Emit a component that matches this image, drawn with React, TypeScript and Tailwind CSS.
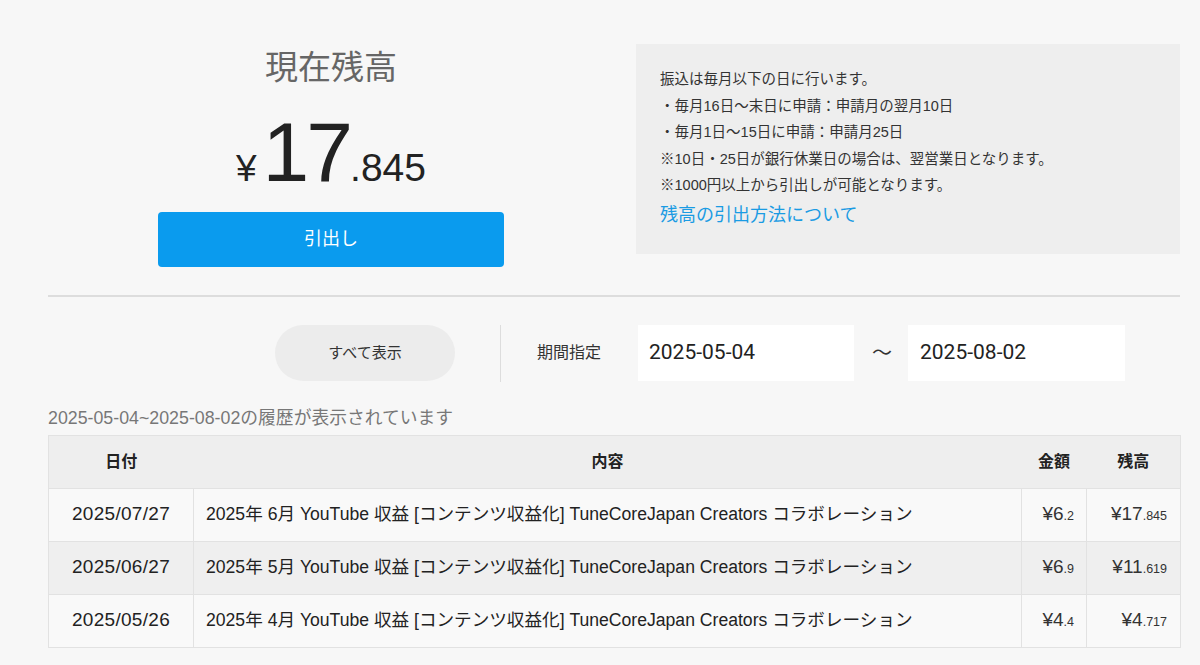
import React from 'react';

const font = { fontFamily: '"Liberation Sans", "Noto Sans CJK JP", sans-serif' };
const inputFont = { fontFamily: 'Roboto, "Liberation Sans", sans-serif' };

type Row = { date: string; month: string; amount: [string, string]; balance: [string, string] };

const rows: Row[] = [
  { date: '2025/07/27', month: '6月', amount: ['6', '2'], balance: ['17', '845'] },
  { date: '2025/06/27', month: '5月', amount: ['6', '9'], balance: ['11', '619'] },
  { date: '2025/05/26', month: '4月', amount: ['4', '4'], balance: ['4', '717'] },
];

const notes = [
  '振込は毎月以下の日に行います。',
  '・毎月16日〜末日に申請：申請月の翌月10日',
  '・毎月1日〜15日に申請：申請月25日',
  '※10日・25日が銀行休業日の場合は、翌営業日となります。',
  '※1000円以上から引出しが可能となります。',
];

const Yen: React.FC<{ value: [string, string] }> = ({ value }) => (
  <span className="text-[19px] text-[#333]">
    ¥{value[0]}
    <span className="text-[12.5px]">.{value[1]}</span>
  </span>
);

const App: React.FC = () => {
  return (
    <div className="min-h-[665px] w-[1200px] bg-[#f7f7f7] pl-[48px] pr-[20px] pt-[44px]" style={font}>
      {/* balance + transfer info */}
      <div className="grid grid-cols-[566px_544px] gap-[22px]">
        <div className="flex flex-col items-center">
          <h2 className="mt-[2px] text-[33px] leading-[44px] text-[#666]">現在残高</h2>
          <div className="mt-[22px] flex items-baseline text-[#222]">
            <span className="mr-[6px] text-[37px]">¥</span>
            <span className="text-[84px] leading-[80px] tracking-[-3px]">17</span>
            <span className="text-[39px]">.845</span>
          </div>
          <button className="mt-[14px] h-[55px] w-[346px] rounded-[4px] bg-[#0a9bee] text-[18px] text-white">
            引出し
          </button>
        </div>
        <div className="h-[210px] bg-[#eeeeee] px-[24px] pt-[22px]">
          {notes.map((n) => (
            <p key={n} className="text-[14.5px] leading-[26.5px] text-[#333]">
              {n}
            </p>
          ))}
          <a className="mt-[3px] block text-[18px] leading-[26px] text-[#1a9be3]">残高の引出方法について</a>
        </div>
      </div>

      <div className="mt-[28px] h-[2px] bg-[#dddddd]" />

      {/* period filter */}
      <div className="mt-[28px] flex h-[57px] items-center pl-[227px]">
        <button className="h-[56px] w-[180px] rounded-full bg-[#ececec] text-[15px] text-[#333]">すべて表示</button>
        <div className="ml-[45px] h-[57px] w-px bg-[#dddddd]" />
        <span className="ml-[36px] text-[16px] text-[#333]">期間指定</span>
        <div className="ml-[37px] flex h-[56px] w-[216px] items-center bg-white pl-[11px] text-[21px] text-[#222]" style={inputFont}>
          2025-05-04
        </div>
        <span className="ml-[18px] w-[36px] text-[20px] text-[#333]">〜</span>
        <div className="flex h-[56px] w-[217px] items-center bg-white pl-[12px] text-[21px] text-[#222]" style={inputFont}>
          2025-08-02
        </div>
      </div>

      <p className="mt-[26px] text-[17.8px] leading-[20px] text-[#777]">2025-05-04~2025-08-02の履歴が表示されています</p>

      {/* history table */}
      <table className="mt-[7px] w-[1132px] table-fixed border-collapse text-[#222]">
        <colgroup>
          <col className="w-[145px]" />
          <col className="w-[828px]" />
          <col className="w-[65px]" />
          <col className="w-[94px]" />
        </colgroup>
        <thead>
          <tr className="h-[53px] border border-[#e2e2e2] bg-[#eeeeee] text-[16px] font-bold">
            <th className="text-center">日付</th>
            <th className="text-center">内容</th>
            <th className="text-center">金額</th>
            <th className="text-center">残高</th>
          </tr>
        </thead>
        <tbody>
          {rows.map((r, i) => (
            <tr key={r.date} className={`h-[53px] ${i === 1 ? 'bg-[#efefef]' : 'bg-[#f9f9f9]'}`}>
              <td className="border border-[#e2e2e2] text-center text-[19px] tracking-[0.3px]">{r.date}</td>
              <td className="whitespace-nowrap border border-[#e2e2e2] pl-[12px] text-[17.6px]">
                2025年 {r.month} YouTube 収益 [コンテンツ収益化] TuneCoreJapan Creators コラボレーション
              </td>
              <td className="border border-[#e2e2e2] pr-[12px] text-right">
                <Yen value={r.amount} />
              </td>
              <td className="border border-[#e2e2e2] pr-[13px] text-right">
                <Yen value={r.balance} />
              </td>
            </tr>
          ))}
        </tbody>
      </table>
    </div>
  );
};

export default App;
